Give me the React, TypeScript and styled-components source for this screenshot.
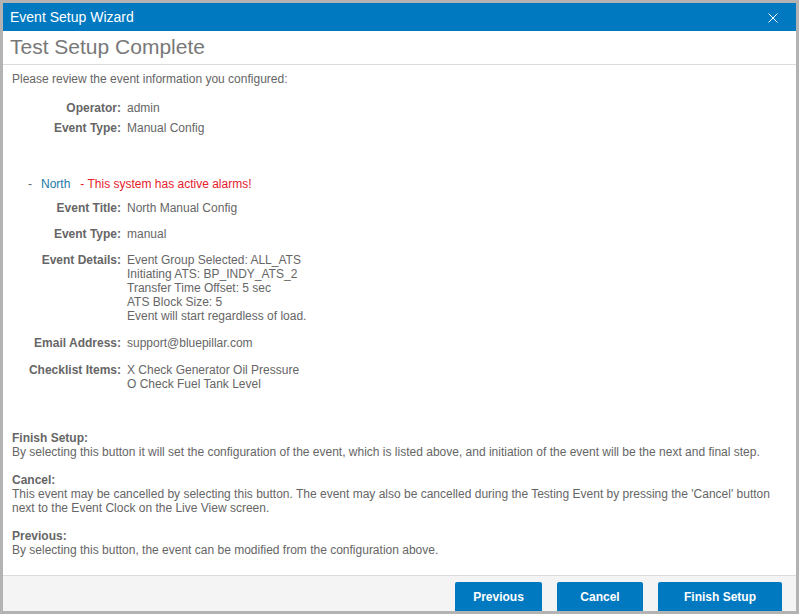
import React from 'react'
import styled, { createGlobalStyle } from 'styled-components'

const GlobalStyle = createGlobalStyle`
    html, body {
        margin: 0;
        padding: 0;
        height: 100%;
        background: #b5b5b5;
    }
    #root {
        height: 100%;
    }
    * {
        box-sizing: border-box;
    }
`

const summary = [
    { label: 'Operator:', lines: ['admin'] },
    { label: 'Event Type:', lines: ['Manual Config'] },
]

const details = [
    { label: 'Event Title:', lines: ['North Manual Config'] },
    { label: 'Event Type:', lines: ['manual'] },
    {
        label: 'Event Details:',
        lines: [
            'Event Group Selected: ALL_ATS',
            'Initiating ATS: BP_INDY_ATS_2',
            'Transfer Time Offset: 5 sec',
            'ATS Block Size: 5',
            'Event will start regardless of load.',
        ],
    },
    { label: 'Email Address:', lines: ['support@bluepillar.com'] },
    { label: 'Checklist Items:', lines: ['X Check Generator Oil Pressure', 'O Check Fuel Tank Level'] },
]

const help = [
    {
        title: 'Finish Setup:',
        text: 'By selecting this button it will set the configuration of the event, which is listed above, and initiation of the event will be the next and final step.',
    },
    {
        title: 'Cancel:',
        text: "This event may be cancelled by selecting this button. The event may also be cancelled during the Testing Event by pressing the 'Cancel' button next to the Event Clock on the Live View screen.",
    },
    {
        title: 'Previous:',
        text: 'By selecting this button, the event can be modified from the configuration above.',
    },
]

export default function App() {
    return (
        <>
            <GlobalStyle />
            <Frame>
                <TitleBar>
                    <TitleText>Event Setup Wizard</TitleText>
                    <CloseButton aria-label="close">
                        <svg width="10" height="10" viewBox="0 0 10 10">
                            <path d="M0.5 0.5 L9.5 9.5 M9.5 0.5 L0.5 9.5" stroke="#fff" strokeWidth="1" fill="none" />
                        </svg>
                    </CloseButton>
                </TitleBar>
                <Heading>Test Setup Complete</Heading>
                <Content>
                    <Intro>Please review the event information you configured:</Intro>
                    <InfoGrid gap={6} top={15}>
                        {summary.map((row) => (
                            <React.Fragment key={row.label}>
                                <Label>{row.label}</Label>
                                <Value>{row.lines.map((l) => <div key={l}>{l}</div>)}</Value>
                            </React.Fragment>
                        ))}
                    </InfoGrid>
                    <SiteLine>
                        <Dash>-</Dash>
                        <SiteName>North</SiteName>
                        <Alarm>- This system has active alarms!</Alarm>
                    </SiteLine>
                    <InfoGrid gap={12} top={10}>
                        {details.map((row, i) => (
                            <React.Fragment key={row.label}>
                                <Label spaced={i > 2}>{row.label}</Label>
                                <Value spaced={i > 2}>{row.lines.map((l) => <div key={l}>{l}</div>)}</Value>
                            </React.Fragment>
                        ))}
                    </InfoGrid>
                    <HelpList>
                        {help.map((h) => (
                            <HelpBlock key={h.title}>
                                <HelpTitle>{h.title}</HelpTitle>
                                <div>{h.text}</div>
                            </HelpBlock>
                        ))}
                    </HelpList>
                </Content>
                <Footer>
                    <Button width={87}>Previous</Button>
                    <Button width={86}>Cancel</Button>
                    <Button width={124}>Finish Setup</Button>
                </Footer>
            </Frame>
        </>
    )
}

const Frame = styled.div`
    height: 100%;
    display: flex;
    flex-direction: column;
    border: 3px solid #b3b3b3;
    background: #fff;
    font-family: "Liberation Sans", Arial, sans-serif;
    overflow: hidden;
`

const TitleBar = styled.div`
    height: 28px;
    flex-shrink: 0;
    display: flex;
    align-items: center;
    justify-content: space-between;
    padding: 0 18px 0 7px;
    background: #0079c1;
`

const TitleText = styled.span`
    color: #fff;
    font-size: 14px;
`

const CloseButton = styled.span`
    display: flex;
    margin-top: 1px;
`

const Heading = styled.h1`
    margin: 0;
    height: 34px;
    flex-shrink: 0;
    padding: 4px 0 0 7px;
    font-size: 21px;
    font-weight: normal;
    color: #787878;
    border-bottom: 1px solid #dcdcdc;
`

const Content = styled.div`
    flex: 1;
    padding: 7px 9px 0 9px;
    font-size: 12px;
    line-height: 14px;
    color: #666;
`

const Intro = styled.div``

const InfoGrid = styled.div<{ gap: number; top: number }>`
    display: grid;
    grid-template-columns: 109px auto;
    column-gap: 6px;
    row-gap: ${({ gap }) => gap}px;
    margin-top: ${({ top }) => top}px;
`

const Label = styled.div<{ spaced?: boolean }>`
    text-align: right;
    font-weight: bold;
    margin-top: ${({ spaced }) => (spaced ? 1 : 0)}px;
`

const Value = styled.div<{ spaced?: boolean }>`
    margin-top: ${({ spaced }) => (spaced ? 1 : 0)}px;
`

const SiteLine = styled.div`
    display: flex;
    margin-top: 42px;
    padding-left: 16px;
`

const Dash = styled.span`
    width: 13px;
`

const SiteName = styled.span`
    color: #1b7aa6;
    margin-right: 10px;
`

const Alarm = styled.span`
    color: #e4212c;
`

const HelpList = styled.div`
    margin-top: 40px;
    display: flex;
    flex-direction: column;
    gap: 14px;
`

const HelpBlock = styled.div``

const HelpTitle = styled.div`
    font-weight: bold;
`

const Footer = styled.div`
    height: 36px;
    flex-shrink: 0;
    display: flex;
    justify-content: flex-end;
    align-items: flex-start;
    gap: 15px;
    padding: 6px 14px 0 0;
    background: #f4f4f4;
    border-top: 1px solid #dcdcdc;
    overflow: hidden;
`

const Button = styled.button<{ width: number }>`
    width: ${({ width }) => width}px;
    height: 32px;
    border: none;
    border-radius: 2px;
    background: #0079c1;
    color: #fff;
    font-family: "Liberation Sans", Arial, sans-serif;
    font-size: 12px;
    font-weight: bold;
    padding: 0 0 3px 0;
    cursor: pointer;
`
